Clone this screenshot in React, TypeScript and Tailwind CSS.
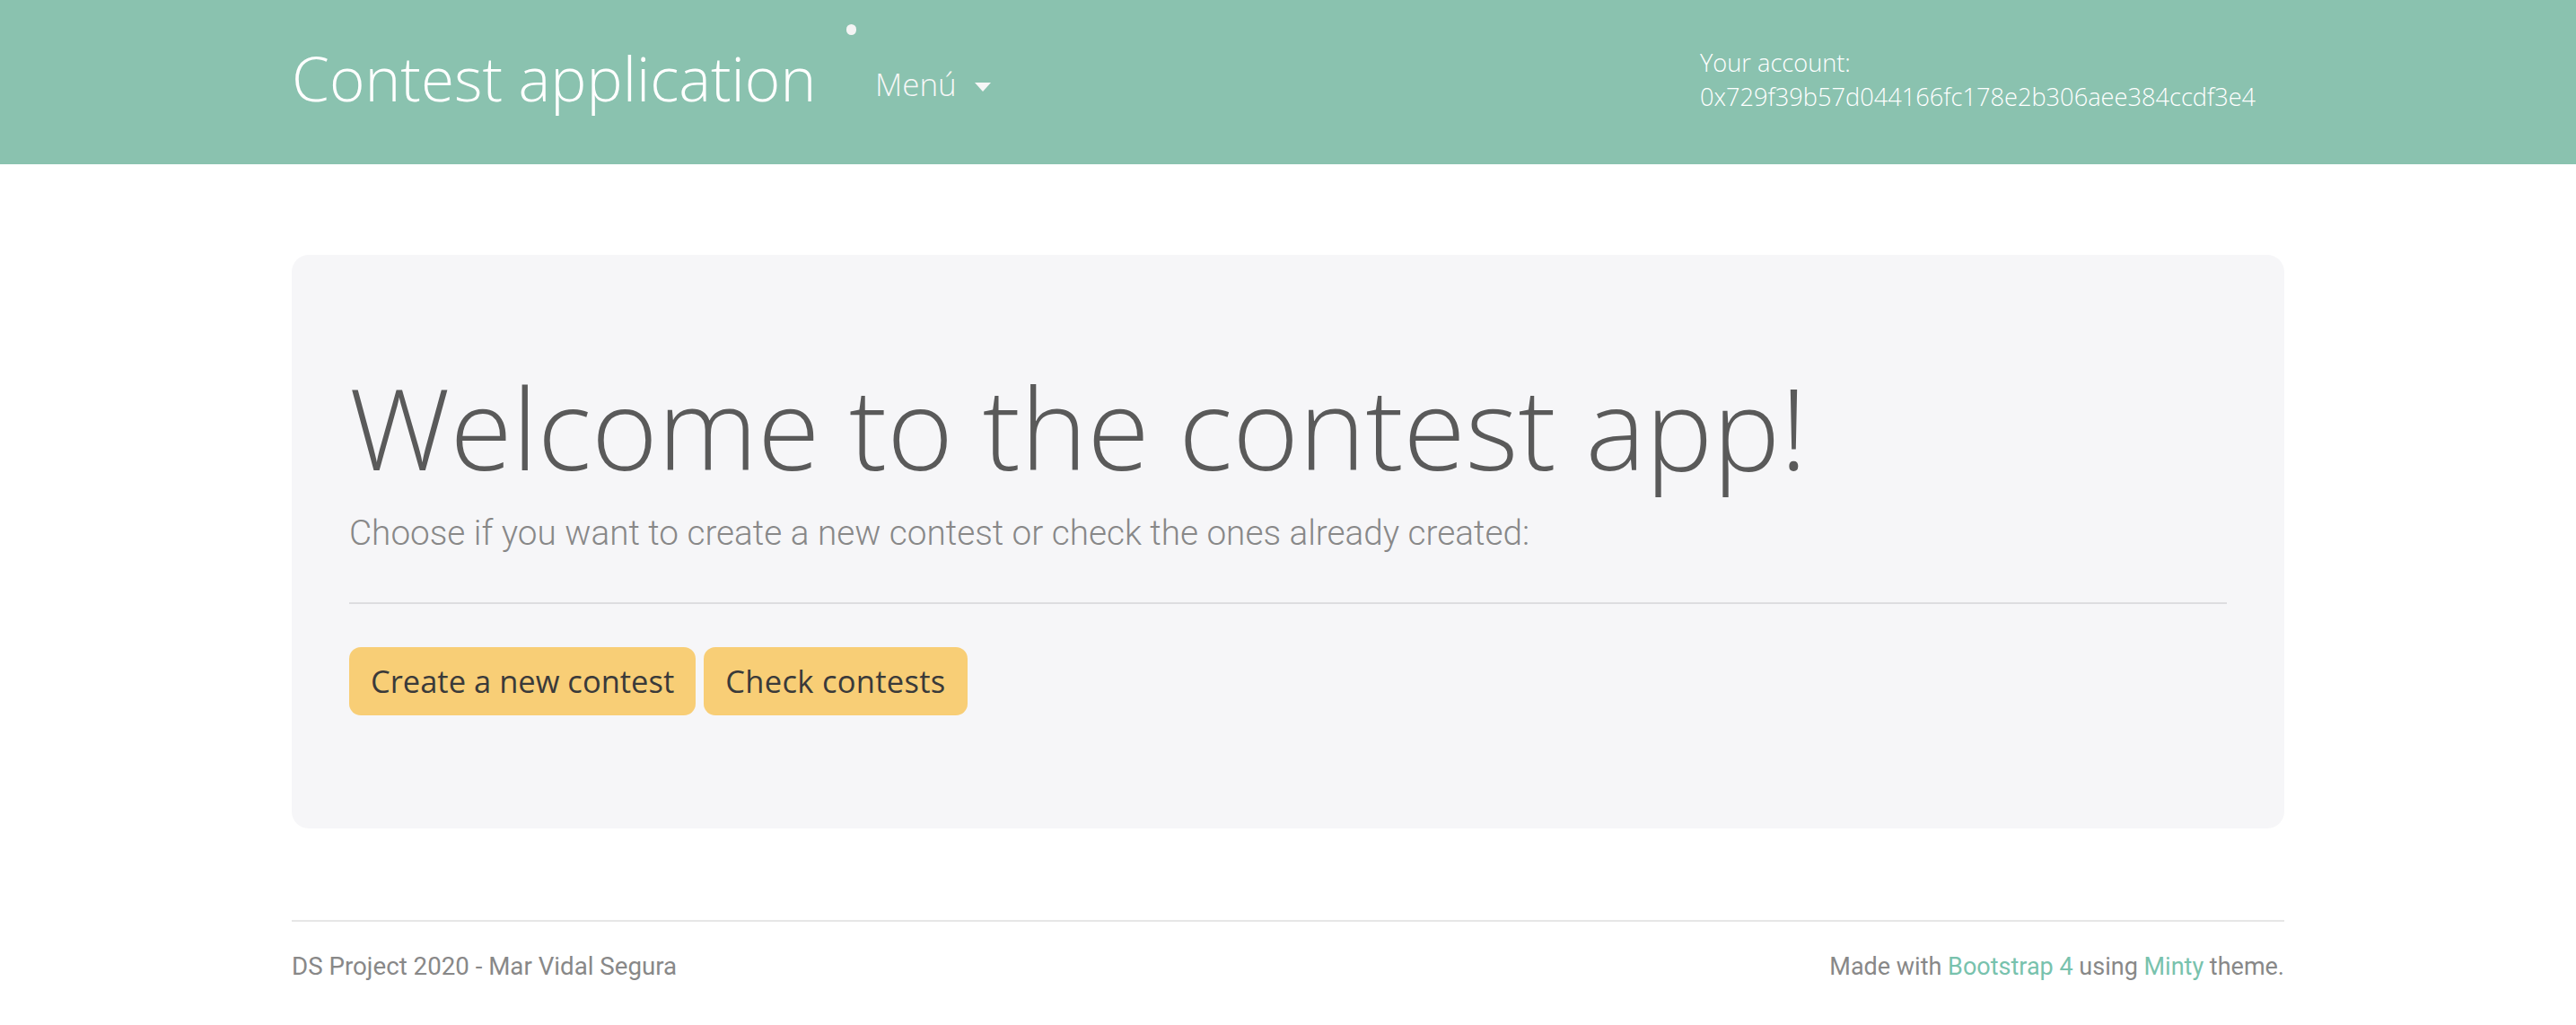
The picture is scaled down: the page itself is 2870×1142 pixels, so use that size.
import React from "react";

const mont = { fontFamily: '"Open Sans", "DejaVu Sans", sans-serif' };

export default function App() {
  return (
    <div className="min-h-screen bg-white">
      <nav className="h-[183px] bg-[#8ac2af] text-white">
        <div className="mx-auto flex h-full w-[2220px] items-center font-['Open_Sans',sans-serif]">
          <div className="relative flex h-full w-[650px] items-center">
            <span className="text-[67.5px] font-light leading-none -mt-[8px]">Contest application</span>
            <span className="absolute left-[618px] top-[27px] h-[12px] w-[11px] rounded-full bg-[#f4f4f4]" />
          </div>
          <div className="flex w-[919px] items-center gap-[20px] pt-[6px] text-[35px] font-light text-[#f7f7f7]">
            <span>Menú</span>
            <span className="mt-[4px] h-0 w-0 border-x-[9px] border-t-[10px] border-x-transparent border-t-[#f7f7f7]" />
          </div>
          <div className="-mt-[5px] flex flex-col text-[27.2px] font-light leading-[38px] text-white">
            <span>Your account:</span>
            <span>0x729f39b57d044166fc178e2b306aee384ccdf3e4</span>
          </div>
        </div>
      </nav>

      <main className="mx-auto w-[2220px]">
        <section className="mt-[101px] rounded-[19px] bg-[#f6f6f8] px-[64px] pb-[126px] pt-[116px]">
          <h1 style={mont} className="text-[126px] font-light leading-[1.2] text-[#5a5a5a]">
            Welcome to the contest app!
          </h1>
          <p className="mt-[14px] font-['Roboto',sans-serif] text-[38.7px] font-light leading-[1.5] text-[#888888]">
            Choose if you want to create a new contest or check the ones already created:
          </p>
          <hr className="my-[48px] border-0 border-t-2 border-[#dddde0]" />
          <div className="flex gap-[9px] font-['Open_Sans',sans-serif]">
            <button className="h-[76px] rounded-[13px] bg-[#f8ce76] px-[24px] text-[34.5px] text-[#3a3a3a]">
              Create a new contest
            </button>
            <button className="h-[76px] rounded-[13px] bg-[#f8ce76] px-[24px] text-[34.5px] tracking-[0.3px] text-[#3a3a3a]">
              Check contests
            </button>
          </div>
        </section>

        <footer className="mt-[102px] border-t-2 border-[#e6e6e6] pb-[40px] pt-[29px] font-['Roboto',sans-serif] text-[#888888]">
          <div className="flex items-center justify-between">
            <span className="text-[27.7px]">DS Project 2020 - Mar Vidal Segura</span>
            <span className="text-[27px]">
              Made with <span className="text-[#78c2ad]">Bootstrap 4</span> using{" "}
              <span className="text-[#78c2ad]">Minty</span> theme.
            </span>
          </div>
        </footer>
      </main>
    </div>
  );
}
